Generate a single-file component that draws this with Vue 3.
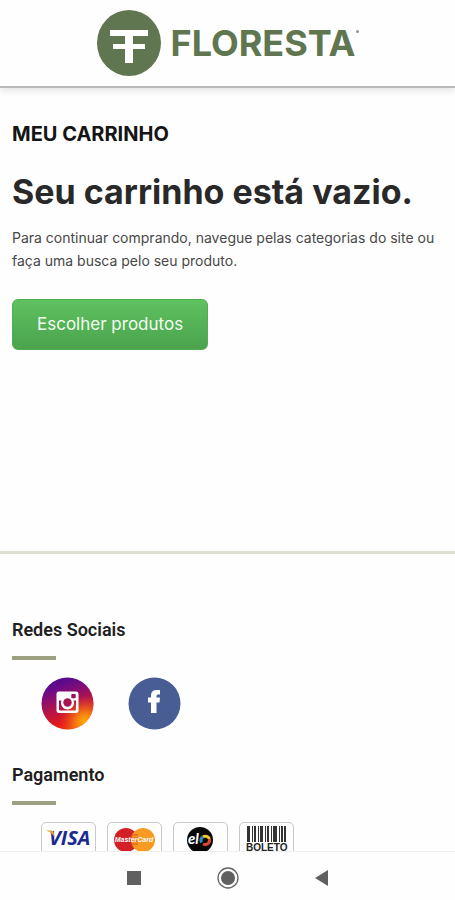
<script setup>
const bars = [
  [0, 3], [5, 1], [7, 2], [11, 1], [13, 3], [18, 1], [20, 2], [24, 1], [26, 4], [32, 1], [34, 2], [37, 2],
]
</script>

<template>
  <div class="screen">
    <header class="header">
      <a class="brand" href="#" aria-label="Floresta">
        <svg class="emblem" viewBox="0 0 64 66" aria-hidden="true">
          <ellipse cx="32" cy="33" rx="32" ry="33" fill="#5f7650" />
          <path d="M13 20H51V26H36V34H48V39H36V53H28V39H16V34H28V26H13Z" fill="#fff" />
        </svg>
        <span class="wordmark">FLORESTA</span>
        <span class="mark"></span>
      </a>
    </header>

    <main class="content">
      <section class="cart">
        <h1 class="title">MEU CARRINHO</h1>
        <h2 class="empty">Seu carrinho está vazio.</h2>
        <p class="hint">Para continuar comprando, navegue pelas categorias do site ou faça uma busca pelo seu produto.</p>
        <button class="choose" type="button">Escolher produtos</button>
      </section>

      <footer class="footer">
        <section class="group social">
          <h3 class="heading">Redes Sociais</h3>
          <div class="links">
            <a href="#" class="network" aria-label="Instagram">
              <svg viewBox="0 0 53 53" aria-hidden="true">
                <defs>
                  <linearGradient id="ig" x1="0.3" y1="0" x2="0.65" y2="1">
                    <stop offset="0" stop-color="#4b0a91" />
                    <stop offset="0.22" stop-color="#720b82" />
                    <stop offset="0.55" stop-color="#b51448" />
                    <stop offset="0.85" stop-color="#e91a16" />
                    <stop offset="1" stop-color="#f43b10" />
                  </linearGradient>
                  <radialGradient id="glow" cx="0.84" cy="0.85" r="0.5">
                    <stop offset="0" stop-color="#ffb000" />
                    <stop offset="0.35" stop-color="#f98b12" stop-opacity="0.85" />
                    <stop offset="1" stop-color="#e8501e" stop-opacity="0" />
                  </radialGradient>
                </defs>
                <circle cx="26.5" cy="26.5" r="26" fill="url(#ig)" />
                <circle cx="26.5" cy="26.5" r="26" fill="url(#glow)" />
                <path fill="#fff" fill-rule="evenodd" d="M18 14.500H35Q37.500 14.500 37.500 17V33.500Q37.500 36 35 36H18Q15.500 36 15.500 33.500V17Q15.500 14.500 18 14.500ZM31 17Q30.300 17 30.300 17.700V20.500Q30.300 21.200 31 21.200H34Q34.700 21.200 34.700 20.500V17.700Q34.700 17 34 17ZM18 23.500V32.500Q18 33.500 19 33.500H34Q35 33.500 35 32.500V23.500H32.500A6.500 6.500 0 1 1 20.500 23.500Z" />
                <circle cx="26.500" cy="25.500" r="4.200" fill="#a3164f" />
              </svg>
            </a>
            <a href="#" class="network" aria-label="Facebook">
              <svg viewBox="0 0 53 53" aria-hidden="true">
                <circle cx="26.5" cy="26.5" r="26" fill="#475d94" />
                <path fill="#fff" d="M23 36V25.500H20V20.500H23V18.500Q23 13 28.500 13H32V17.500H30Q28.500 17.500 28.500 19V20.500H32L31.500 25.500H28.500V36Z" />
              </svg>
            </a>
          </div>
        </section>

        <section class="group payment">
          <h3 class="heading">Pagamento</h3>
          <ul class="cards">
            <li class="card">
              <svg viewBox="0 0 53 36" role="img" aria-label="Visa">
                <text x="7" y="22" class="visa">VISA</text>
                <path d="M4 7.500H9.500Q11 7.500 11.500 9L12.500 14Q10 9.500 4 7.500Z" fill="#eba236" />
              </svg>
            </li>
            <li class="card">
              <svg viewBox="0 0 53 36" role="img" aria-label="MasterCard">
                <circle cx="18" cy="17" r="12" fill="#d32027" />
                <circle cx="35" cy="17" r="12" fill="#f79b22" />
                <path d="M23 12H30M23 15H30M23 18H30M23 21H30" stroke="#e24a25" />
                <text x="26" y="19" class="master">MasterCard</text>
              </svg>
            </li>
            <li class="card">
              <svg viewBox="0 0 53 36" role="img" aria-label="Elo">
                <circle cx="26" cy="17" r="13" fill="#080808" />
                <text x="14" y="21" class="elo">el</text>
                <g fill="none" stroke-width="3">
                  <path d="M27.500 19.500A4.500 4.500 0 0 1 29 13.800" stroke="#248bc7" />
                  <path d="M29 13.800A4.500 4.500 0 0 1 35.500 16" stroke="#f3c62b" />
                  <path d="M35.500 16A4.500 4.500 0 0 1 29 21" stroke="#dc4932" />
                </g>
              </svg>
            </li>
            <li class="card">
              <svg viewBox="0 0 53 36" role="img" aria-label="Boleto">
                <rect v-for="[x, w] in bars" :key="x" :x="x + 7" y="3" :width="w" height="16" fill="#333" />
                <text x="6" y="28" class="boleto">BOLETO</text>
              </svg>
            </li>
          </ul>
        </section>
      </footer>
    </main>

    <nav class="system" aria-label="Sistema">
      <button type="button" aria-label="Recentes">
        <svg viewBox="0 0 24 24"><rect x="5" y="5" width="14" height="14" fill="#606060" /></svg>
      </button>
      <button type="button" aria-label="Início">
        <svg viewBox="0 0 24 24">
          <circle cx="12" cy="12" r="10" fill="none" stroke="#656565" stroke-width="1.300" />
          <circle cx="12" cy="12" r="7" fill="#606060" />
        </svg>
      </button>
      <button type="button" aria-label="Voltar">
        <svg viewBox="0 0 24 24"><path d="M5 12L18 4V20Z" fill="#606060" /></svg>
      </button>
    </nav>
  </div>
</template>

<style>
body {
  background: #fefefe;
}
</style>

<style scoped>
.screen {
  display: flex;
  flex-direction: column;
  height: 100vh;
  overflow: hidden;
  font-family: Inter, "Noto Sans", sans-serif;
  color: #292929;
}
.header {
  position: relative;
  display: flex;
  flex: none;
  justify-content: center;
  padding: 10px 0;
  border-bottom: 2px solid #b9b9b9;
  box-shadow: 0 2px 8px rgba(0, 0, 0, 0.12);
}
.brand {
  display: flex;
  align-items: center;
  color: #5f7650;
  text-decoration: none;
}
.emblem {
  width: 64px;
  height: 66px;
  margin-right: 10px;
}
.wordmark {
  font: 700 36px/40px Inter, sans-serif;
}
.mark {
  align-self: flex-start;
  width: 3px;
  height: 3px;
  margin-top: 20px;
  border-radius: 50%;
  background: #8b9b80;
}
.content {
  display: flex;
  flex: 1;
  flex-direction: column;
  min-height: 0;
  overflow: hidden;
}
.cart {
  flex: none;
  padding: 32px 12px 201px;
}
.title,
.empty,
.hint,
.heading,
.cards {
  margin: 0;
}
.title {
  font-size: 20px;
  line-height: 28px;
  font-weight: 700;
  color: #151515;
}
.empty {
  margin-top: 24px;
  font-size: 34px;
  line-height: 40px;
  font-weight: 700;
}
.hint {
  margin-top: 14px;
  font-size: 14px;
  line-height: 23px;
  color: #484848;
}
.choose {
  display: block;
  margin-top: 27px;
  padding: 0 24px 2px;
  height: 51px;
  border: 1px solid #4fae51;
  border-radius: 6px;
  background: linear-gradient(#5fc160, #4ba34d);
  color: #f3fff1;
  font: 400 17px/24px Inter, sans-serif;
}
.footer {
  flex: none;
  padding: 62px 12px 0;
  border-top: 3px solid #dddfd3;
}
.heading {
  font: 600 18px/28px Roboto, sans-serif;
  color: #202020;
}
.heading::after {
  content: "";
  display: block;
  width: 44px;
  height: 4px;
  margin-top: 12px;
  background: #9da181;
}
.links {
  display: flex;
  gap: 34px;
  padding: 17px 29px 0;
}
.network,
.network svg {
  display: block;
  width: 53px;
  height: 53px;
}
.payment {
  margin-top: 31px;
}
.cards {
  display: flex;
  gap: 11px;
  padding: 17px 29px 0;
  list-style: none;
}
.card {
  box-sizing: border-box;
  width: 55px;
  height: 38px;
  border: 1px solid #c9c9c9;
  border-radius: 5px;
}
.card svg {
  display: block;
  width: 53px;
  height: 36px;
}
.visa {
  font: italic 700 20px "Open Sans", sans-serif;
  fill: #1b2a91;
}
.master {
  font: italic 700 7px "Liberation Sans", sans-serif;
  fill: #fff;
  text-anchor: middle;
}
.elo {
  font: italic 700 15px Lato, sans-serif;
  fill: #fff;
}
.boleto {
  font: 700 10px "Liberation Sans", sans-serif;
  fill: #222;
}
.system {
  display: flex;
  flex: none;
  align-items: center;
  justify-content: center;
  gap: 70px;
  height: 45px;
  padding-top: 3px;
  border-top: 1px solid #f0f0f0;
  background: #fefefe;
}
.system button {
  display: block;
  padding: 0;
  border: 0;
  background: none;
}
.system svg {
  display: block;
  width: 24px;
  height: 24px;
}
</style>
